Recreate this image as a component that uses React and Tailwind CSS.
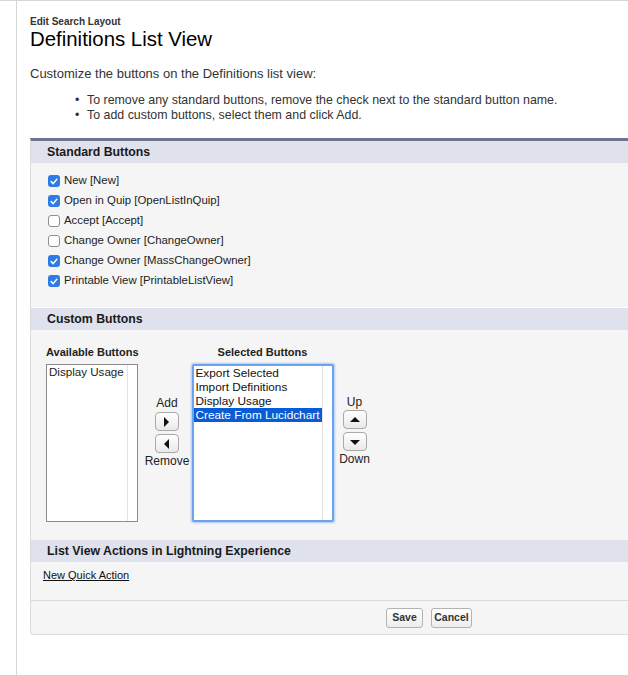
import React from 'react';

const font = { fontFamily: '"Liberation Sans", Arial, sans-serif' };
const narrow = { fontFamily: '"Liberation Sans Narrow", "Liberation Sans", Arial, sans-serif' };

function Check({ on }) {
    if (!on) {
        return <span className="inline-block w-[12px] h-[12px] rounded-[3px] border border-[#8f8f8f] bg-white shrink-0" />;
    }
    return (
        <span className="inline-flex items-center justify-center w-[12px] h-[12px] rounded-[3px] bg-[#2d7be5] shrink-0">
            <svg width="8" height="7" viewBox="0 0 8 7">
                <path d="M1.2 3.6 L3.2 5.6 L6.8 1.2" stroke="white" strokeWidth="1.5" fill="none" strokeLinecap="round" strokeLinejoin="round" />
            </svg>
        </span>
    );
}

function Arrow({ dir }) {
    const paths = {
        right: 'M2 0 L7 5 L2 10 Z',
        left: 'M7 0 L2 5 L7 10 Z',
        up: 'M0 7 L5 2 L10 7 Z',
        down: 'M0 3 L5 8 L10 3 Z',
    };
    return (
        <button className="w-[24px] h-[19px] rounded-[4px] border border-[#a9a9a9] bg-gradient-to-b from-white to-[#e9e9e9] flex items-center justify-center">
            <svg width="10" height="10" viewBox="0 0 10 10">
                <path d={paths[dir]} fill="#111" />
            </svg>
        </button>
    );
}

function SectionHeader({ children }) {
    return (
        <div className="h-[22px] bg-[#dfe1ec] flex items-center pl-[16px] text-[12.3px] font-bold text-[#1a1a1a]">
            {children}
        </div>
    );
}

const standard = [
    { on: true, label: 'New [New]' },
    { on: true, label: 'Open in Quip [OpenListInQuip]' },
    { on: false, label: 'Accept [Accept]' },
    { on: false, label: 'Change Owner [ChangeOwner]' },
    { on: true, label: 'Change Owner [MassChangeOwner]' },
    { on: true, label: 'Printable View [PrintableListView]' },
];

const selected = ['Export Selected', 'Import Definitions', 'Display Usage', 'Create From Lucidchart'];

export default function App() {
    return (
        <div className="w-[628px] h-[675px] overflow-hidden bg-white border-t border-[#d6d6d6] text-[#222]" style={font}>
            <div className="ml-[16px] h-full border-l border-[#d6d6d6] pl-[13px]">
                {/* page title */}
                <div className="pt-[14px]">
                    <div className="text-[10px] font-bold leading-[13px] text-[#333]">Edit Search Layout</div>
                    <h1 className="text-[20.4px] leading-[22px] text-black">Definitions List View</h1>
                </div>

                <p className="mt-[16px] text-[13px] leading-[16px] text-[#333]">Customize the buttons on the Definitions list view:</p>
                <ul className="mt-[11px] text-[12.4px] leading-[15px] text-[#333]">
                    <li className="flex pl-[45px]"><span className="w-[12px]">•</span>To remove any standard buttons, remove the check next to the standard button name.</li>
                    <li className="flex pl-[45px]"><span className="w-[12px]">•</span>To add custom buttons, select them and click Add.</li>
                </ul>

                {/* main panel */}
                <div className="mt-[15px] w-[798px] border-t-[3px] border-[#6b7391] border-x border-b border-x-[#dcdcdc] border-b-[#dcdcdc] rounded-b-[4px] bg-[#f5f5f5]">
                    <SectionHeader>Standard Buttons</SectionHeader>
                    <div className="pt-[8px] pb-[16px] pl-[17px] border-b border-white">
                        {standard.map((item, i) => (
                            <label key={i} className="h-[20px] flex items-center gap-[4px] text-[11.4px] text-[#222]">
                                <Check on={item.on} />
                                {item.label}
                            </label>
                        ))}
                    </div>

                    <SectionHeader>Custom Buttons</SectionHeader>
                    <div className="pl-[15px] pt-[15px] pb-[18px] flex text-[11px]">
                        <div className="flex flex-col">
                            <div className="h-[14px] leading-[14px] font-bold text-[11px] text-[#222] mb-[5px]">Available Buttons</div>
                            <div className="w-[92px] h-[158px] border border-[#8c8c8c] bg-white flex">
                                <div className="flex-1 pl-[2px] leading-[14px] text-[11.6px]">Display Usage</div>
                                <div className="w-[10px] border-l border-[#e2e2e2]" />
                            </div>
                        </div>

                        <div className="w-[43px] ml-[7px] flex flex-col items-center pt-[51px] text-[12px] leading-[14px]">
                            <span>Add</span>
                            <div className="mt-[2px]"><Arrow dir="right" /></div>
                            <div className="mt-[3px]"><Arrow dir="left" /></div>
                            <span className="mt-[1px]">Remove</span>
                        </div>

                        <div className="flex flex-col ml-[3px]">
                            <div className="h-[14px] leading-[14px] font-bold text-[11px] text-[#222] mb-[5px] text-center">Selected Buttons</div>
                            <div className="w-[142px] h-[158px] border-[2px] border-[#6da3ec] rounded-[2px] shadow-[0_0_2px_1px_#a9c8f3] bg-white flex">
                                <div className="flex-1 text-[11.8px] leading-[14px]">
                                    {selected.map((s, i) => (
                                        <div
                                            key={s}
                                            className={`pl-[2px] ${i === 3 ? 'bg-[#0a5bd6] text-white' : 'text-[#111]'}`}
                                        >
                                            {s}
                                        </div>
                                    ))}
                                </div>
                                <div className="w-[10px] border-l border-[#e2e2e2]" />
                            </div>
                        </div>

                        <div className="w-[36px] ml-[3px] flex flex-col items-center pt-[50px] text-[12px] leading-[14px]">
                            <span>Up</span>
                            <div className="mt-[1px]"><Arrow dir="up" /></div>
                            <div className="mt-[3px]"><Arrow dir="down" /></div>
                            <span className="mt-[1px]">Down</span>
                        </div>
                    </div>

                    <SectionHeader>List View Actions in Lightning Experience</SectionHeader>
                    <div className="h-[39px] pl-[12px] pt-[6px] text-[11px] leading-[14px] border-b border-[#dadada]">
                        <a href="#" className="underline text-[#111]" style={narrow}>New Quick Action</a>
                    </div>
                    <div className="h-[33px] pt-[1px] flex items-center justify-center gap-[8px]">
                        <button className="w-[37px] h-[20px] rounded-[3px] border border-[#b3b3b3] bg-gradient-to-b from-white to-[#ededed] text-[10.5px] font-bold text-[#333]" style={narrow}>Save</button>
                        <button className="w-[41px] h-[20px] rounded-[3px] border border-[#b3b3b3] bg-gradient-to-b from-white to-[#ededed] text-[10.5px] font-bold text-[#333]" style={narrow}>Cancel</button>
                    </div>
                </div>
            </div>
        </div>
    );
}
